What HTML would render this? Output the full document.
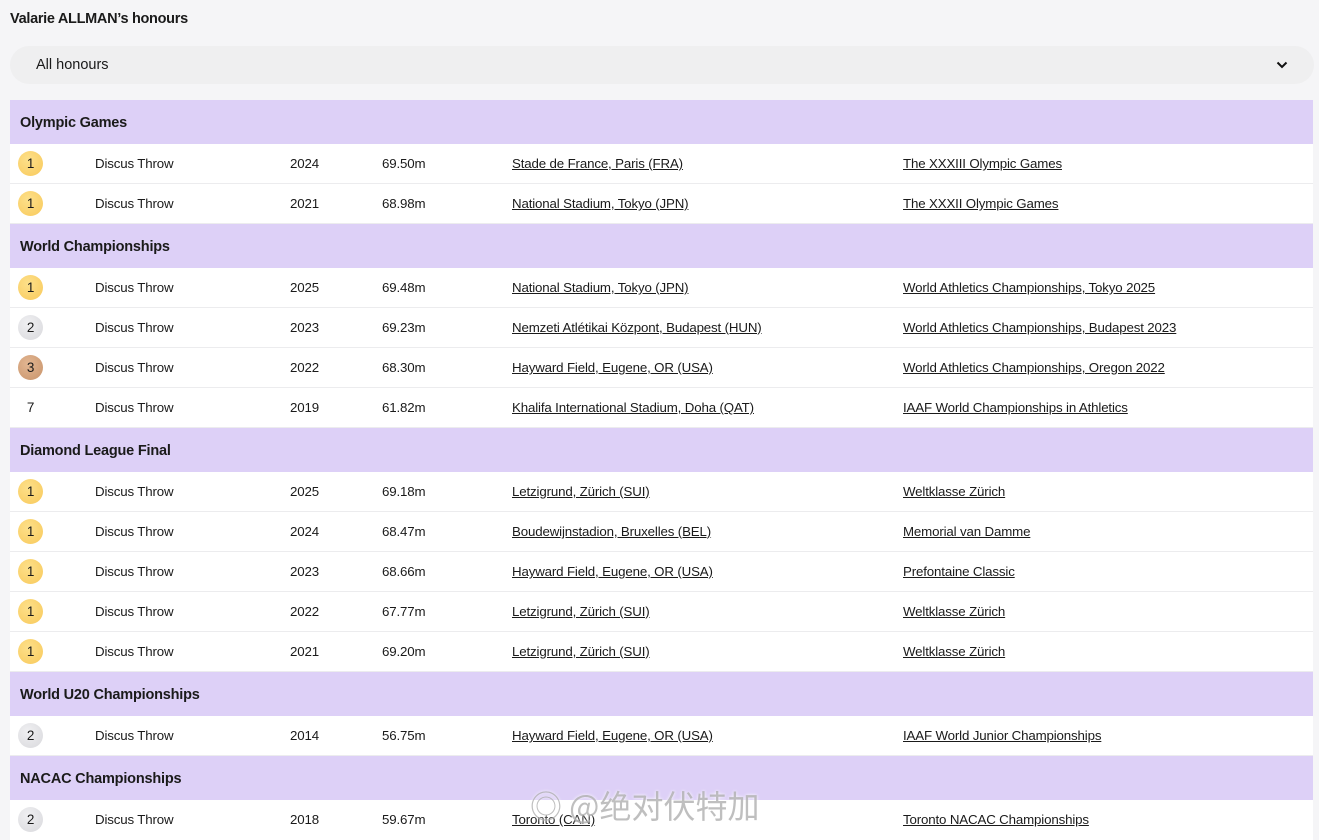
<!DOCTYPE html>
<html><head><meta charset="utf-8"><style>
*{margin:0;padding:0;box-sizing:border-box}
body{width:1319px;height:836px;overflow:hidden;background:#f5f5f7;font-family:"Liberation Sans",sans-serif;color:#1a1a1a;position:relative}
h1{position:absolute;left:10px;top:11px;font-size:14.5px;font-weight:bold;letter-spacing:-0.3px}
.dd{position:absolute;left:10px;top:46px;width:1304px;height:38px;border-radius:19px;background:#efeff0;font-size:14.5px;padding:11px 26px}
.dd svg{position:absolute;right:26px;top:15px}
.tb{position:absolute;left:10px;top:100px;width:1303px}
.h{height:44px;background:#ddd0f7;font-size:14.5px;font-weight:bold;padding:15px 10px 0;letter-spacing:-0.2px}
.r{height:40px;background:#fff;border-bottom:1px solid #ececee;position:relative;font-size:13.3px;letter-spacing:-0.15px}
.r:last-child{border-bottom:none}
.r span{position:absolute;top:12px}
.m{position:absolute;left:8px;top:7px;width:25px;height:25px;border-radius:50%;text-align:center;line-height:25px;font-size:13.5px}
.g{background:radial-gradient(circle at 40% 35%,#fde08a,#f8c95b)}
.s{background:radial-gradient(circle at 40% 35%,#f0f0f2,#d8d8dc)}
.b{background:radial-gradient(circle at 40% 35%,#e2b692,#c8936a)}
.n{background:none}
.e{left:85px}.y{left:280px}.k{left:372px}.v{left:502px;text-decoration:underline}.c{left:893px;text-decoration:underline}
.wm{position:absolute;left:530px;top:782px;font-size:32px;color:rgba(170,170,170,.75);font-family:"Noto Sans CJK SC",sans-serif;text-shadow:0 0 3px #fff}
</style></head><body>
<h1>Valarie ALLMAN’s honours</h1>
<div class="dd">All honours<svg width="12" height="8" viewBox="0 0 12 8"><path d="M1.5 1.5L6 6 10.5 1.5" stroke="#111" stroke-width="2" fill="none"/></svg></div>
<div class="tb">
<div class="h">Olympic Games</div>
<div class="r"><div class="m g">1</div><span class="e">Discus Throw</span><span class="y">2024</span><span class="k">69.50m</span><span class="v">Stade de France, Paris (FRA)</span><span class="c">The XXXIII Olympic Games</span></div>
<div class="r"><div class="m g">1</div><span class="e">Discus Throw</span><span class="y">2021</span><span class="k">68.98m</span><span class="v">National Stadium, Tokyo (JPN)</span><span class="c">The XXXII Olympic Games</span></div>
<div class="h">World Championships</div>
<div class="r"><div class="m g">1</div><span class="e">Discus Throw</span><span class="y">2025</span><span class="k">69.48m</span><span class="v">National Stadium, Tokyo (JPN)</span><span class="c">World Athletics Championships, Tokyo 2025</span></div>
<div class="r"><div class="m s">2</div><span class="e">Discus Throw</span><span class="y">2023</span><span class="k">69.23m</span><span class="v">Nemzeti Atlétikai Központ, Budapest (HUN)</span><span class="c">World Athletics Championships, Budapest 2023</span></div>
<div class="r"><div class="m b">3</div><span class="e">Discus Throw</span><span class="y">2022</span><span class="k">68.30m</span><span class="v">Hayward Field, Eugene, OR (USA)</span><span class="c">World Athletics Championships, Oregon 2022</span></div>
<div class="r"><div class="m n">7</div><span class="e">Discus Throw</span><span class="y">2019</span><span class="k">61.82m</span><span class="v">Khalifa International Stadium, Doha (QAT)</span><span class="c">IAAF World Championships in Athletics</span></div>
<div class="h">Diamond League Final</div>
<div class="r"><div class="m g">1</div><span class="e">Discus Throw</span><span class="y">2025</span><span class="k">69.18m</span><span class="v">Letzigrund, Zürich (SUI)</span><span class="c">Weltklasse Zürich</span></div>
<div class="r"><div class="m g">1</div><span class="e">Discus Throw</span><span class="y">2024</span><span class="k">68.47m</span><span class="v">Boudewijnstadion, Bruxelles (BEL)</span><span class="c">Memorial van Damme</span></div>
<div class="r"><div class="m g">1</div><span class="e">Discus Throw</span><span class="y">2023</span><span class="k">68.66m</span><span class="v">Hayward Field, Eugene, OR (USA)</span><span class="c">Prefontaine Classic</span></div>
<div class="r"><div class="m g">1</div><span class="e">Discus Throw</span><span class="y">2022</span><span class="k">67.77m</span><span class="v">Letzigrund, Zürich (SUI)</span><span class="c">Weltklasse Zürich</span></div>
<div class="r"><div class="m g">1</div><span class="e">Discus Throw</span><span class="y">2021</span><span class="k">69.20m</span><span class="v">Letzigrund, Zürich (SUI)</span><span class="c">Weltklasse Zürich</span></div>
<div class="h">World U20 Championships</div>
<div class="r"><div class="m s">2</div><span class="e">Discus Throw</span><span class="y">2014</span><span class="k">56.75m</span><span class="v">Hayward Field, Eugene, OR (USA)</span><span class="c">IAAF World Junior Championships</span></div>
<div class="h">NACAC Championships</div>
<div class="r"><div class="m s">2</div><span class="e">Discus Throw</span><span class="y">2018</span><span class="k">59.67m</span><span class="v">Toronto (CAN)</span><span class="c">Toronto NACAC Championships</span></div>
</div>
<div class="wm">◎ @绝对伏特加</div>
</body></html>
